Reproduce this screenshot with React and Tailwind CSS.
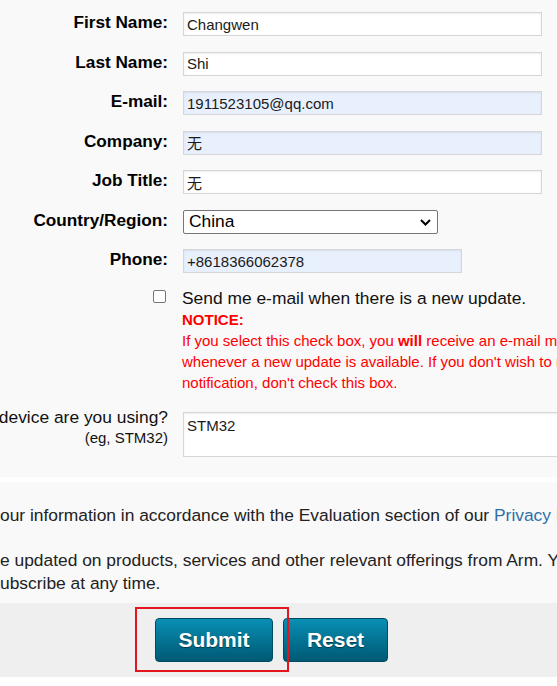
import React from "react";

const font = { fontFamily: '"Liberation Sans", Arial, "Noto Sans CJK SC", sans-serif' };

function Row({ label, children }) {
  return (
    <div className="flex h-[24px]">
      <div className="w-[168px] shrink-0 text-right font-bold text-[17.2px] leading-[20px] text-black whitespace-nowrap">
        {label}
      </div>
      <div className="ml-[15px]">{children}</div>
    </div>
  );
}

function Field({ value, blue, w = "w-[359px]" }) {
  return (
    <input
      readOnly
      value={value}
      className={`${w} h-[24px] border border-[#d6d6d6] shadow-[inset_0_1px_2px_rgba(0,0,0,0.08)] px-[3px] text-[15px] text-[#1a1a1a] outline-none ${blue ? "bg-[#e8f0fe]" : "bg-white"}`}
      style={font}
    />
  );
}

export default function App() {
  return (
    <div className="w-[557px] h-[686px] overflow-hidden bg-white" style={font}>
      <div className="bg-[#f9f9f9] h-[477px] pt-[12px]">
        <div className="flex flex-col gap-[15.5px]">
          <Row label="First Name:"><Field value="Changwen" /></Row>
          <Row label="Last Name:"><Field value="Shi" /></Row>
          <Row label="E-mail:"><Field value="1911523105@qq.com" blue /></Row>
          <Row label="Company:"><Field value="无" blue /></Row>
          <Row label="Job Title:"><Field value="无" /></Row>
          <Row label="Country/Region:">
            <div className="relative w-[255px] h-[24px] border border-[#767676] rounded-[2px] bg-white flex items-center pl-[5px] text-[17.4px] text-black">
              China
              <svg className="absolute right-[6px] top-[8px]" width="11" height="7" viewBox="0 0 11 7">
                <path d="M1 1 L5.5 5.5 L10 1" fill="none" stroke="#000" strokeWidth="2" />
              </svg>
            </div>
          </Row>
          <Row label="Phone:"><Field value="+8618366062378" blue w="w-[279px]" /></Row>
        </div>

        <div className="flex mt-[13.5px]">
          <div className="w-[168px] shrink-0 flex justify-end pr-[2px]">
            <div className="mt-[3.5px] w-[13px] h-[13px] border border-[#767676] rounded-[2px] bg-white" />
          </div>
          <div className="ml-[14px] whitespace-nowrap">
            <div className="text-[17.4px] leading-[22px] text-[#111]">Send me e-mail when there is a new update.</div>
            <div className="text-[15px] leading-[21px] text-[#ff0000]">
              <div className="font-bold">NOTICE:</div>
              <div>If you select this check box, you <b>will</b> receive an e-mail message</div>
              <div>whenever a new update is available. If you don't wish to receive e-mail</div>
              <div>notification, don't check this box.</div>
            </div>
          </div>
        </div>

        <div className="flex mt-[14px]">
          <div className="w-[168px] shrink-0 flex flex-col items-end overflow-hidden text-[#111] whitespace-nowrap">
            <div className="text-[17.4px] leading-[20px]">device are you using?</div>
            <div className="text-[15px] leading-[21px]">(eg, STM32)</div>
          </div>
          <textarea
            readOnly
            value="STM32"
            className="ml-[15px] mt-[5.5px] w-[420px] h-[45px] shrink-0 border border-[#d6d6d6] shadow-[inset_0_1px_2px_rgba(0,0,0,0.08)] bg-white px-[3px] py-[2px] text-[15px] text-[#1a1a1a] resize-none outline-none"
            style={font}
          />
        </div>
      </div>

      <div className="h-[5px] bg-white" />

      <div className="h-[121px] bg-[#f9f9f9] pt-[22px] text-[17.4px] leading-[22.5px] text-[#222] whitespace-nowrap overflow-hidden">
        <p className="mb-[22.5px]">
          our information in accordance with the Evaluation section of our{" "}
          <span className="text-[#2f6fa8]">Privacy</span>{" "}
          <span className="text-[#f2a27a]">Policy</span>
        </p>
        <p>e updated on products, services and other relevant offerings from Arm. You can</p>
        <p>ubscribe at any time.</p>
      </div>

      <div className="relative h-[74px] bg-[#efefef] pt-[15px] pl-[155px] flex gap-[10px]">
        <button className="w-[118px] h-[44px] rounded-[4px] border border-[#004a60] bg-linear-to-b from-[#0a8fb4] to-[#005a74] text-white font-bold text-[21px] [text-shadow:0_1px_1px_rgba(0,0,0,0.5)]" style={font}>
          Submit
        </button>
        <button className="w-[105px] h-[44px] rounded-[4px] border border-[#004a60] bg-linear-to-b from-[#0a8fb4] to-[#005a74] text-white font-bold text-[21px] [text-shadow:0_1px_1px_rgba(0,0,0,0.5)]" style={font}>
          Reset
        </button>
        <div className="absolute left-[135px] top-[4px] w-[154px] h-[65px] border-2 border-[#e3161f] pointer-events-none" />
      </div>
    </div>
  );
}
